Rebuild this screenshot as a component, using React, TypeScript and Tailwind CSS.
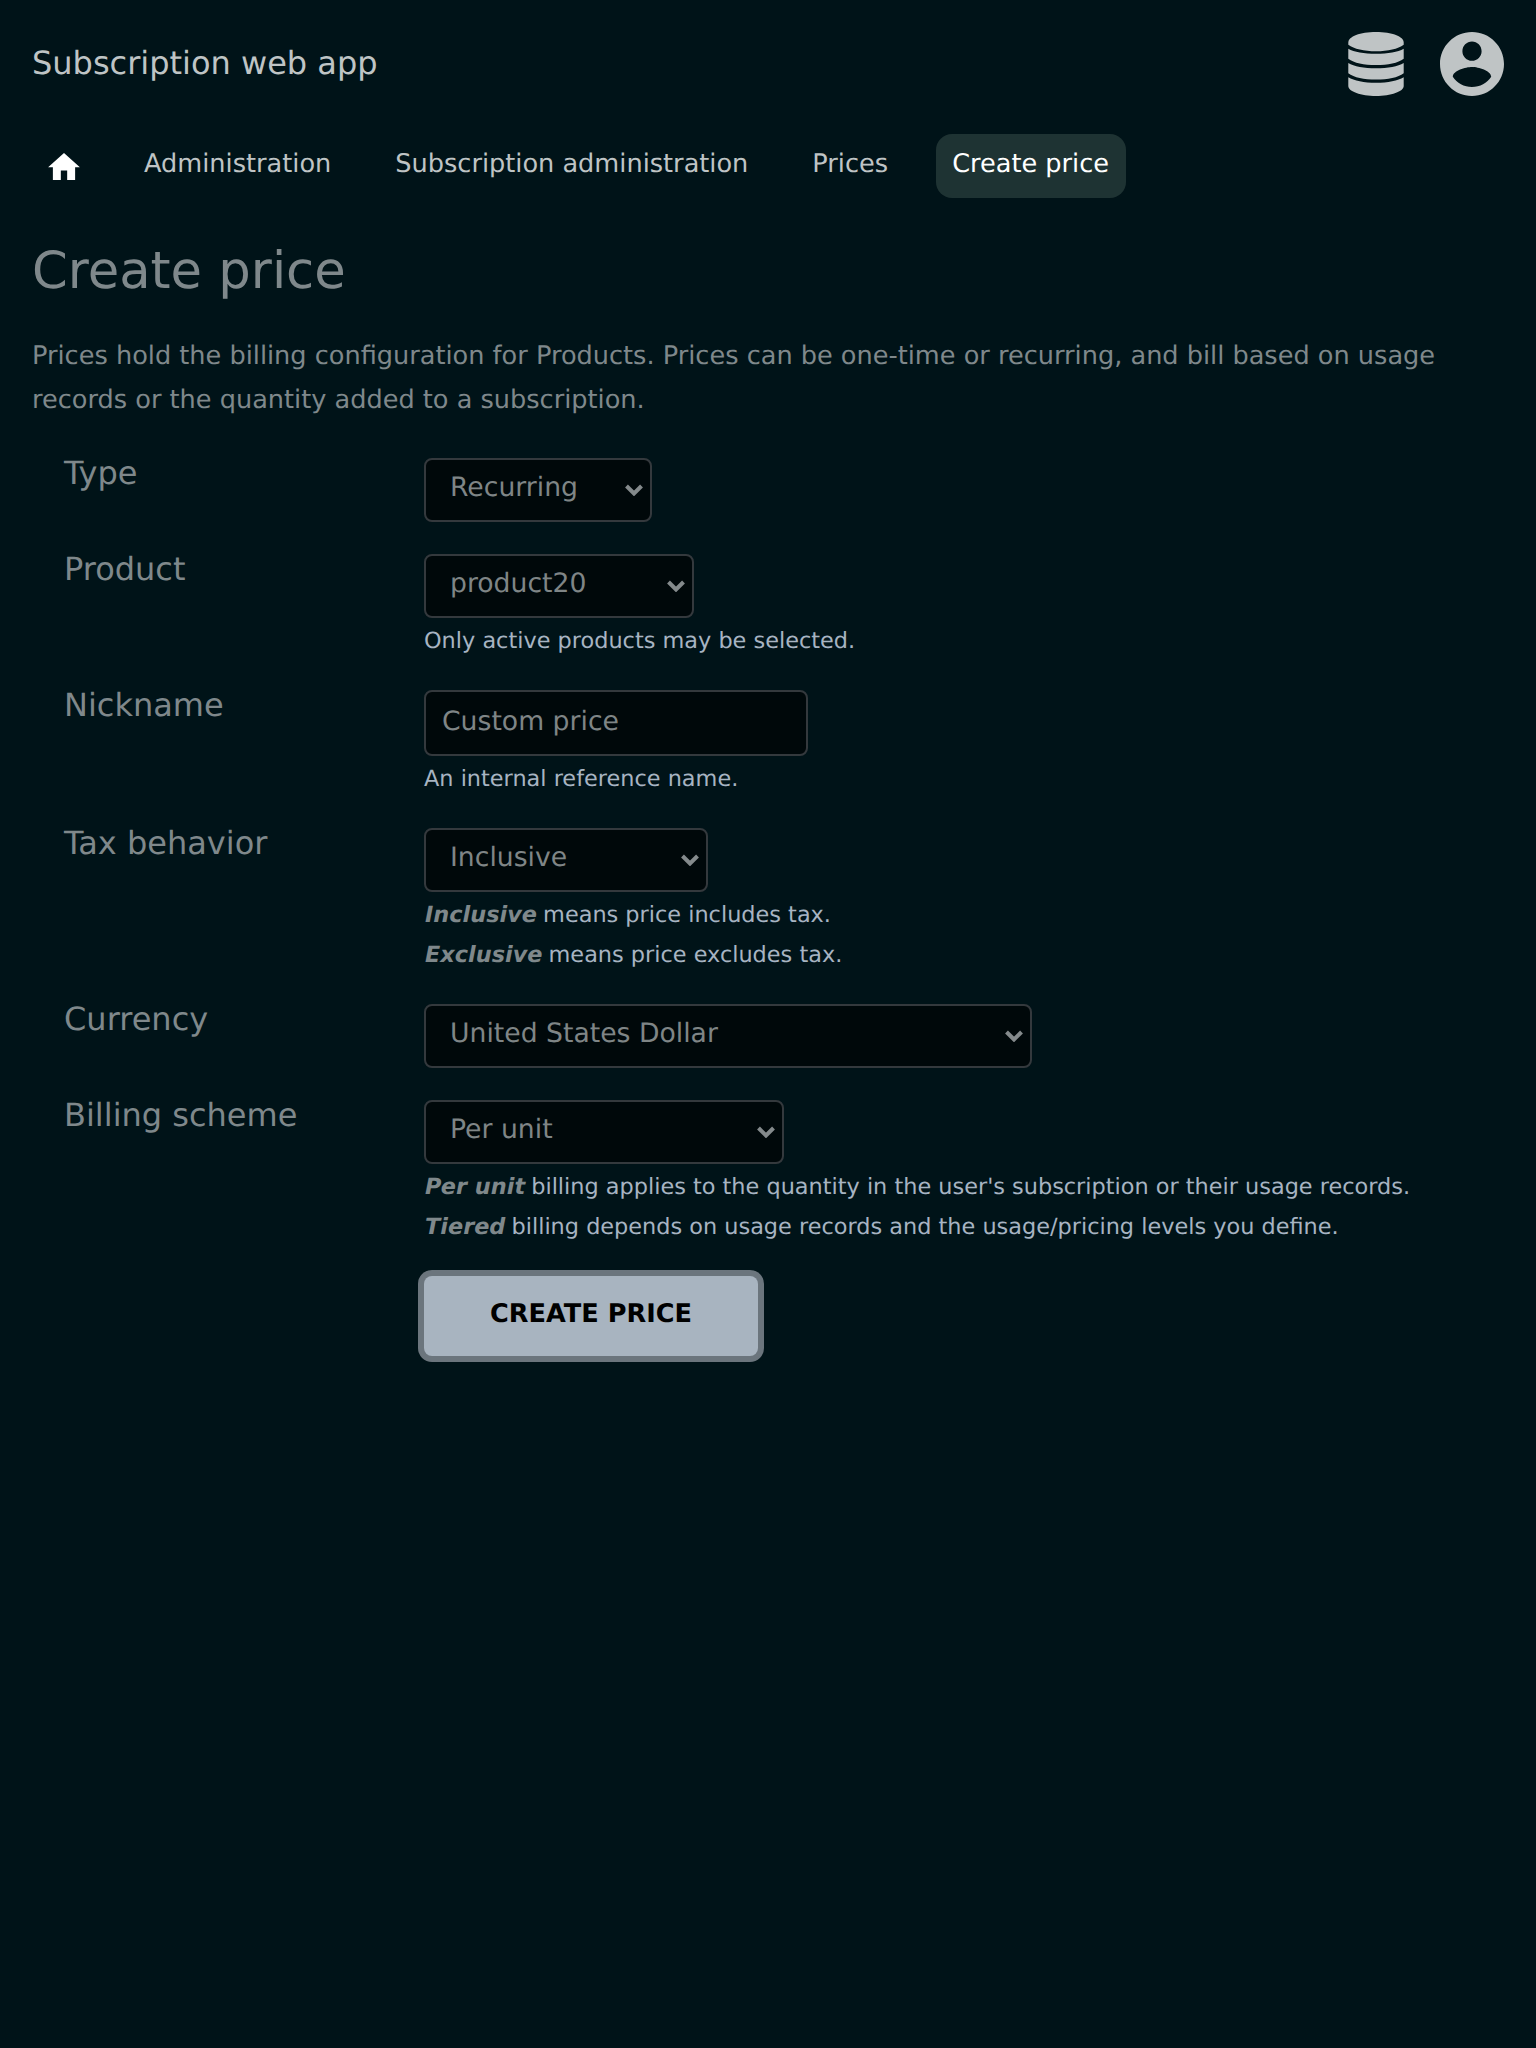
import type { ReactNode } from 'react';

function Chevron() {
  return (
    <svg viewBox="0 0 18 12" className="mt-[24px] mr-[7px] h-[12px] w-[18px] shrink-0" fill="none" stroke="#848a8c" strokeWidth="4">
      <path d="M1.5 2 L9 9.5 L16.5 2" />
    </svg>
  );
}

function Select({ value, width }: { value: string; width: string }) {
  return (
    <button type="button" className={'flex h-16 items-start justify-between rounded-lg border-2 border-[#34393d] bg-[#00080a] text-[26.67px] text-[#7f8586] [text-rendering:geometricPrecision] ' + width}>
      <span className="pt-3 pl-6 leading-[32px]">{value}</span>
      <Chevron />
    </button>
  );
}

function Row({ label, children, className }: { label: string; children: ReactNode; className: string }) {
  return (
    <div className={'flex items-start ' + className}>
      <div className="w-[360px] shrink-0 text-[32px] leading-[32px] text-[#7f888b] -mt-px">{label}</div>
      <div className="min-w-0 flex-1">{children}</div>
    </div>
  );
}

function Hints({ children }: { children: ReactNode }) {
  return <div className="pt-[3px] text-[22.4px] leading-[40px] text-[#a7b4c2]">{children}</div>;
}

function Term({ children }: { children: ReactNode }) {
  return <strong className="-mr-px ml-px font-bold text-[#7f888b] italic">{children}</strong>;
}

export default function App() {
  return (
    <div className="min-h-[2048px] w-[1536px] overflow-hidden bg-[#001318] font-['DejaVu_Sans',sans-serif] [text-rendering:geometricPrecision]">
      <header className="flex h-[134px] items-start justify-between px-8 pt-8">
        <div className="pt-[11px] text-[32px] leading-[40px] text-[#bfc4c5]">Subscription web app</div>
        <div className="flex gap-8">
          <svg viewBox="0 0 64 64" className="size-16" fill="#bfc4c5">
            <path d="M4.300 10.500 C4.300 4.500 16 0 32 0 S59.700 4.500 59.700 10.500 V12.700 C54 17 44 19.200 32 19.200 S10 17 4.300 12.700Z" />
            <path d="M4.300 16.700 C10 20 20 21.700 32 21.700 S54 20 59.700 16.700 V26.700 C54 31 44 33 32 33 S10 31 4.300 26.700Z" />
            <path d="M4.300 30.900 C10 34.300 20 36.200 32 36.200 S54 34.300 59.700 30.900 V41.200 C54 45.500 44 47.500 32 47.500 S10 45.500 4.300 41.200Z" />
            <path d="M4.300 45.200 C10 48.700 20 50.700 32 50.700 S54 48.700 59.700 45.200 V54 C59.700 59.500 47 64 32 64 S4.300 59.500 4.300 54Z" />
          </svg>
          <svg viewBox="2 2 20 20" className="size-16" fill="#bfc4c5">
            <path d="M12 2C6.480 2 2 6.480 2 12s4.480 10 10 10 10-4.480 10-10S17.520 2 12 2zm0 3c1.660 0 3 1.340 3 3s-1.340 3-3 3-3-1.340-3-3 1.340-3 3-3zm0 14.200c-2.500 0-4.710-1.280-6-3.220.030-1.990 4-3.080 6-3.080 1.990 0 5.970 1.090 6 3.080-1.290 1.940-3.500 3.220-6 3.220z" />
          </svg>
        </div>
      </header>

      <nav className="flex h-16 items-start gap-8 px-8 text-[25.6px] leading-[32px] text-[#bfc4c5]">
        <a className="h-16 w-16 px-4 pt-[19px]">
          <svg viewBox="2 3 20 17" className="h-[27px] w-8" fill="#ffffff">
            <path d="M10 20v-6h4v6h5v-8h3L12 3 2 12h3v8z" />
          </svg>
        </a>
        <a className="h-16 px-4 pt-[14px]">Administration</a>
        <a className="h-16 px-4 pt-[14px]">Subscription administration</a>
        <a className="h-16 px-4 pt-[14px]">Prices</a>
        <a className="h-16 w-[190px] rounded-2xl bg-[#1e3333] pt-[14px] pl-4 text-white">Create price</a>
      </nav>

      <main>
        <h1 className="mt-[41px] px-8 text-[51.2px] leading-[64px] text-[#7f888b]">Create price</h1>
        <p className="mt-[31px] px-8 text-[25.6px] leading-[44px] text-[#7f888b]">
          Prices hold the billing configuration for Products. Prices can be one-time or recurring, and bill based on usage records or the quantity added to a subscription.
        </p>

        <form className="mt-9 px-16">
          <Row label="Type" className="h-24">
            <Select value="Recurring" width="w-[228px]" />
          </Row>
          <Row label="Product" className="h-[136px]">
            <Select value="product20" width="w-[270px]" />
            <Hints>Only active products may be selected.</Hints>
          </Row>
          <Row label="Nickname" className="h-[138px]">
            <div className="h-[66px] w-[384px] rounded-lg border-2 border-[#34393d] bg-[#00080a] pt-[14px] pl-4 text-[26.67px] leading-[32px] text-[#7f8586]">Custom price</div>
            <Hints>An internal reference name.</Hints>
          </Row>
          <Row label="Tax behavior" className="h-[176px]">
            <Select value="Inclusive" width="w-[284px]" />
            <Hints>
              <p><Term>Inclusive</Term> means price includes tax.</p>
              <p><Term>Exclusive</Term> means price excludes tax.</p>
            </Hints>
          </Row>
          <Row label="Currency" className="h-24">
            <Select value="United States Dollar" width="w-[608px]" />
          </Row>
          <Row label="Billing scheme" className="h-[176px]">
            <Select value="Per unit" width="w-[360px]" />
            <Hints>
              <p><Term>Per unit</Term> billing applies to the quantity in the user's subscription or their usage records.</p>
              <p><Term>Tiered</Term> billing depends on usage records and the usage/pricing levels you define.</p>
            </Hints>
          </Row>
          <button type="button" className="ml-[360px] block h-20 w-[334px] rounded-lg bg-[#a8b4c0] pb-1 text-center text-[25.6px] font-bold text-black ring-[6px] ring-[#6b757d] [text-rendering:geometricPrecision]">
            CREATE PRICE
          </button>
        </form>
      </main>
    </div>
  );
}
